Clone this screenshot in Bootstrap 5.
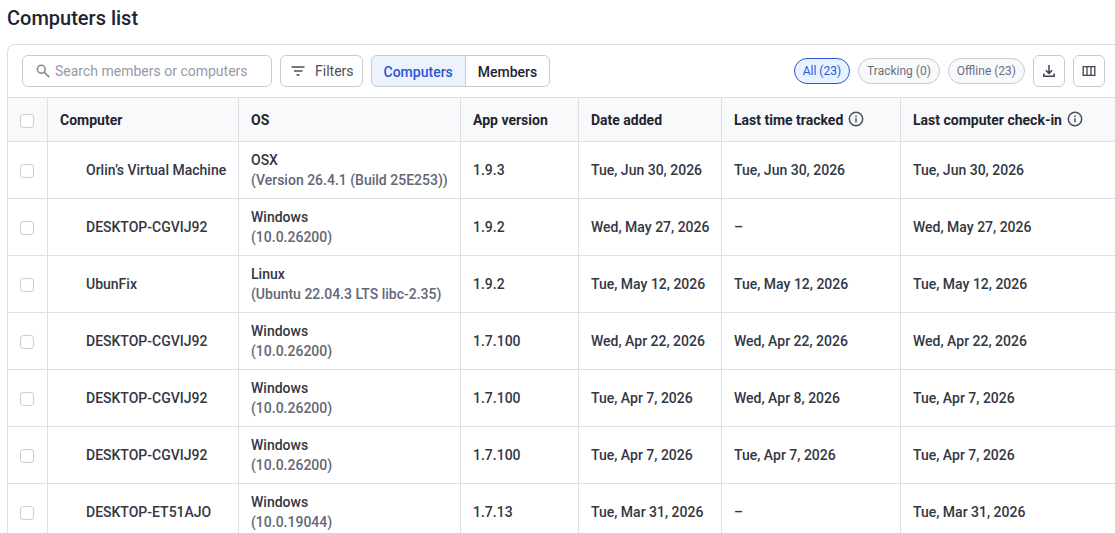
<!DOCTYPE html>
<html lang="en">
<head>
<meta charset="utf-8">
<meta name="viewport" content="width=device-width, initial-scale=1">
<title>Computers list</title>
<link rel="stylesheet" href="https://cdn.jsdelivr.net/npm/bootstrap@5.3.0/dist/css/bootstrap.min.css">
<style>
  :root { --line: #dddfe4; --control: #c8cad3; --ink: #1f2430; --body-ink: #323744; --soft: #626776; --blue: #2a56d6; }
  body { font-family: Roboto, "Liberation Sans", sans-serif; font-size: 14px; line-height: 20px; color: var(--body-ink); }
  .page { padding: 6px 0 0 7px; }
  .page-title { font-size: 20px; line-height: 24px; font-weight: 500; color: var(--ink); margin-bottom: 14px; }
  .panel { border: 1px solid var(--line); border-right: 0; border-bottom: 0; border-top-left-radius: 8px; overflow: hidden; }
  .toolbar { padding: 10px 10px 10px 14px; }
  .search { width: 250px; height: 32px; border: 1px solid var(--control); border-radius: 6px; padding: 0 12px; }
  .search input { font-size: 14px; line-height: 20px; }
  .search input::placeholder { color: #959aa8; opacity: 1; }
  .search svg { color: #858a97; }
  .tool-btn { --bs-btn-font-size: 14px; --bs-btn-line-height: 20px; --bs-btn-border-radius: 6px; --bs-btn-border-color: var(--control); --bs-btn-color: #4a4f5c; --bs-btn-padding-y: 5px; --bs-btn-padding-x: 8px; height: 32px; }
  .square { width: 32px; --bs-btn-padding-x: 0px; color: #3f4451; }
  .switch .btn { --bs-btn-padding-x: 12px; --bs-btn-font-weight: 500; --bs-btn-color: var(--ink); padding-top: 6px; padding-bottom: 4px; --bs-btn-active-bg: #edf2ff; --bs-btn-active-color: var(--blue); --bs-btn-active-border-color: var(--control); }
  .pill { --bs-btn-font-size: 12px; --bs-btn-line-height: 16px; --bs-btn-padding-y: 4px; --bs-btn-padding-x: 8px; --bs-btn-border-color: var(--control); --bs-btn-bg: #f8f9fb; --bs-btn-color: #6b7080; --bs-btn-active-bg: #e8f2ff; --bs-btn-active-color: var(--blue); --bs-btn-active-border-color: var(--blue); height: 26px; }
  .grid { table-layout: fixed; border-collapse: separate; border-spacing: 0; border-top: 1px solid var(--line); color: var(--body-ink); }
  .grid > :not(caption) > * > * { padding: 8px 12px; border-bottom: 1px solid var(--line); border-right: 1px solid var(--line); white-space: nowrap; color: inherit; font-weight: 500; vertical-align: middle; }
  .grid > :not(caption) > * > :last-child { border-right: 0; }
  .grid > thead > tr > * { height: 44px; background: #f8f9fb; color: var(--ink); font-weight: 700; }
  .grid > tbody > tr > * { height: 57px; }
  .grid > tbody > tr > .machine { padding-left: 38px; }
  .version { color: var(--soft); }
  .form-check-input { width: 14px; height: 14px; border-color: var(--control); margin: 2px 0 0; }
  .c-check { width: 40px; } .c-name { width: 191px; } .c-os { width: 222px; } .c-app { width: 118px; } .c-added { width: 143px; } .c-track { width: 179px; }
</style>
</head>
<body>
<main class="page">
  <h1 class="page-title">Computers list</h1>
  <section class="panel">
    <div class="toolbar d-flex align-items-center gap-2">
      <label class="search d-flex align-items-center">
        <svg class="flex-shrink-0" width="16" height="16" viewBox="0 0 16 16" fill="none" stroke="currentColor" stroke-width="1.6" aria-hidden="true"><circle cx="6.3" cy="6.2" r="3.9"/><path d="M9.200 9.100l5 5"/></svg>
        <input class="form-control border-0 shadow-none bg-transparent p-0 ms-1" type="text" placeholder="Search members or computers" aria-label="Search members or computers">
      </label>
      <button class="btn tool-btn d-flex align-items-center gap-2" type="button">
        <svg width="18" height="18" viewBox="0 0 18 18" fill="none" stroke="currentColor" stroke-width="1.5" aria-hidden="true"><path d="M2.500 5h13M5 9h8.500M7.500 13h3"/></svg>
        Filters
      </button>
      <div class="btn-group switch" role="group" aria-label="View">
        <button class="btn tool-btn active" type="button" aria-pressed="true">Computers</button>
        <button class="btn tool-btn" type="button" aria-pressed="false">Members</button>
      </div>
      <div class="d-flex align-items-center gap-2 ms-auto">
        <button class="btn pill rounded-pill active" type="button">All (23)</button>
        <button class="btn pill rounded-pill" type="button">Tracking (0)</button>
        <button class="btn pill rounded-pill" type="button">Offline (23)</button>
        <button class="btn tool-btn square d-flex align-items-center justify-content-center" type="button" aria-label="Download">
          <svg width="16" height="16" viewBox="0 0 16 16" fill="none" stroke="currentColor" stroke-width="1.5" aria-hidden="true"><path d="M8 2v8M4.800 7.200L8 10.400l3.200-3.200M2.800 10.500v2.700h10.400v-2.700"/></svg>
        </button>
        <button class="btn tool-btn square d-flex align-items-center justify-content-center" type="button" aria-label="Choose columns">
          <svg width="16" height="16" viewBox="0 0 16 16" fill="none" stroke="currentColor" stroke-width="1.3" aria-hidden="true"><path d="M2.200 3.700h11.600v8.600H2.200zM6 3.700v8.600M10 3.700v8.600"/></svg>
        </button>
      </div>
    </div>
    <table class="table grid mb-0">
      <colgroup><col class="c-check"><col class="c-name"><col class="c-os"><col class="c-app"><col class="c-added"><col class="c-track"><col></colgroup>
      <thead>
        <tr>
          <th scope="col"><input class="form-check-input d-block" type="checkbox" aria-label="Select all computers"></th>
          <th scope="col">Computer</th>
          <th scope="col">OS</th>
          <th scope="col">App version</th>
          <th scope="col">Date added</th>
          <th scope="col"><span class="d-flex align-items-center gap-1">Last time tracked
            <svg width="18" height="18" viewBox="0 0 18 18" fill="none" stroke="#4a4f5c" stroke-width="1.5" role="img" aria-label="Info"><circle cx="9" cy="8" r="6.700"/><path d="M9 7.300v4M9 4.500v1.500"/></svg></span></th>
          <th scope="col"><span class="d-flex align-items-center gap-1">Last computer check-in
            <svg width="18" height="18" viewBox="0 0 18 18" fill="none" stroke="#4a4f5c" stroke-width="1.5" role="img" aria-label="Info"><circle cx="9" cy="8" r="6.700"/><path d="M9 7.300v4M9 4.500v1.500"/></svg></span></th>
        </tr>
      </thead>
      <tbody>
        <tr><td><input class="form-check-input d-block" type="checkbox" aria-label="Select Orlin’s Virtual Machine"></td><td class="machine">Orlin’s Virtual Machine</td><td>OSX<div class="version">(Version 26.4.1 (Build 25E253))</div></td><td>1.9.3</td><td>Tue, Jun 30, 2026</td><td>Tue, Jun 30, 2026</td><td>Tue, Jun 30, 2026</td></tr>
        <tr><td><input class="form-check-input d-block" type="checkbox" aria-label="Select DESKTOP-CGVIJ92"></td><td class="machine">DESKTOP-CGVIJ92</td><td>Windows<div class="version">(10.0.26200)</div></td><td>1.9.2</td><td>Wed, May 27, 2026</td><td>–</td><td>Wed, May 27, 2026</td></tr>
        <tr><td><input class="form-check-input d-block" type="checkbox" aria-label="Select UbunFix"></td><td class="machine">UbunFix</td><td>Linux<div class="version">(Ubuntu 22.04.3 LTS libc-2.35)</div></td><td>1.9.2</td><td>Tue, May 12, 2026</td><td>Tue, May 12, 2026</td><td>Tue, May 12, 2026</td></tr>
        <tr><td><input class="form-check-input d-block" type="checkbox" aria-label="Select DESKTOP-CGVIJ92"></td><td class="machine">DESKTOP-CGVIJ92</td><td>Windows<div class="version">(10.0.26200)</div></td><td>1.7.100</td><td>Wed, Apr 22, 2026</td><td>Wed, Apr 22, 2026</td><td>Wed, Apr 22, 2026</td></tr>
        <tr><td><input class="form-check-input d-block" type="checkbox" aria-label="Select DESKTOP-CGVIJ92"></td><td class="machine">DESKTOP-CGVIJ92</td><td>Windows<div class="version">(10.0.26200)</div></td><td>1.7.100</td><td>Tue, Apr 7, 2026</td><td>Wed, Apr 8, 2026</td><td>Tue, Apr 7, 2026</td></tr>
        <tr><td><input class="form-check-input d-block" type="checkbox" aria-label="Select DESKTOP-CGVIJ92"></td><td class="machine">DESKTOP-CGVIJ92</td><td>Windows<div class="version">(10.0.26200)</div></td><td>1.7.100</td><td>Tue, Apr 7, 2026</td><td>Tue, Apr 7, 2026</td><td>Tue, Apr 7, 2026</td></tr>
        <tr><td><input class="form-check-input d-block" type="checkbox" aria-label="Select DESKTOP-ET51AJO"></td><td class="machine">DESKTOP-ET51AJO</td><td>Windows<div class="version">(10.0.19044)</div></td><td>1.7.13</td><td>Tue, Mar 31, 2026</td><td>–</td><td>Tue, Mar 31, 2026</td></tr>
      </tbody>
    </table>
  </section>
</main>
<script src="https://cdn.jsdelivr.net/npm/bootstrap@5.3.0/dist/js/bootstrap.bundle.min.js"></script>
</body>
</html>
